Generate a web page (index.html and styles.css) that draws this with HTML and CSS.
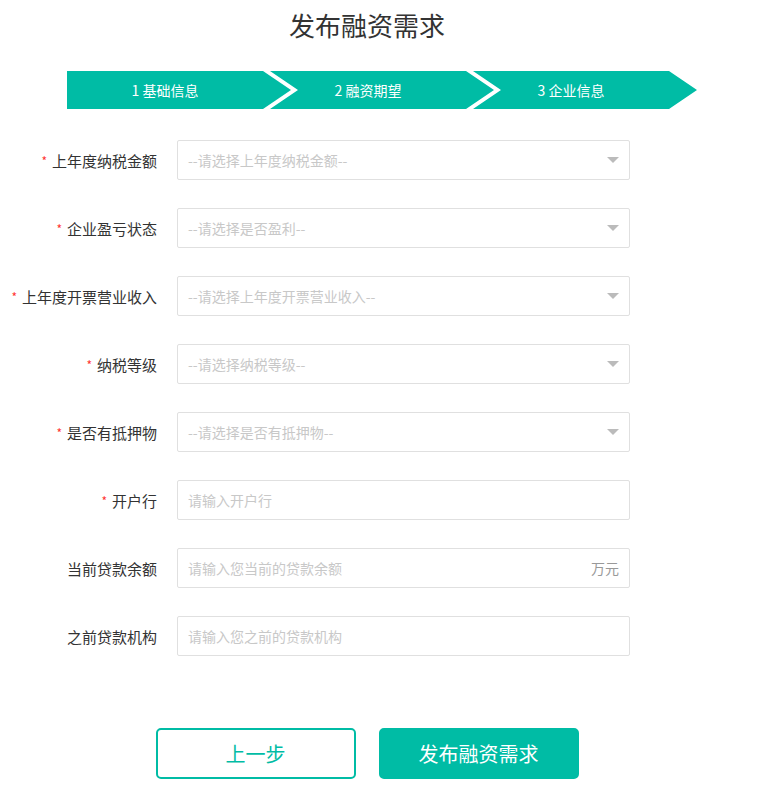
FILE: index.html
```html
<!DOCTYPE html>
<html lang="zh-CN">
<head>
    <meta charset="UTF-8">
    <meta name="viewport" content="width=device-width, initial-scale=1.0">
    <title>发布融资需求</title>
    <link rel="stylesheet" href="styles.css">
</head>
<body>
    <div class="page">
        <h1 class="title">发布融资需求</h1>

        <div class="steps">
            <div class="step step-first">1 基础信息</div>
            <div class="step">2 融资期望</div>
            <div class="step">3 企业信息</div>
        </div>

        <form class="form">
            <div class="form-row">
                <label class="form-label"><span class="required">*</span>上年度纳税金额</label>
                <div class="select">
                    <span class="select-text">--请选择上年度纳税金额--</span>
                    <span class="select-arrow"></span>
                </div>
            </div>
            <div class="form-row">
                <label class="form-label"><span class="required">*</span>企业盈亏状态</label>
                <div class="select">
                    <span class="select-text">--请选择是否盈利--</span>
                    <span class="select-arrow"></span>
                </div>
            </div>
            <div class="form-row">
                <label class="form-label"><span class="required">*</span>上年度开票营业收入</label>
                <div class="select">
                    <span class="select-text">--请选择上年度开票营业收入--</span>
                    <span class="select-arrow"></span>
                </div>
            </div>
            <div class="form-row">
                <label class="form-label"><span class="required">*</span>纳税等级</label>
                <div class="select">
                    <span class="select-text">--请选择纳税等级--</span>
                    <span class="select-arrow"></span>
                </div>
            </div>
            <div class="form-row">
                <label class="form-label"><span class="required">*</span>是否有抵押物</label>
                <div class="select">
                    <span class="select-text">--请选择是否有抵押物--</span>
                    <span class="select-arrow"></span>
                </div>
            </div>
            <div class="form-row">
                <label class="form-label"><span class="required">*</span>开户行</label>
                <div class="field">
                    <input class="field-input" type="text" placeholder="请输入开户行">
                </div>
            </div>
            <div class="form-row">
                <label class="form-label">当前贷款余额</label>
                <div class="field">
                    <input class="field-input" type="text" placeholder="请输入您当前的贷款余额">
                    <span class="field-unit">万元</span>
                </div>
            </div>
            <div class="form-row">
                <label class="form-label">之前贷款机构</label>
                <div class="field">
                    <input class="field-input" type="text" placeholder="请输入您之前的贷款机构">
                </div>
            </div>
        </form>

        <div class="actions">
            <button class="btn btn-outline" type="button">上一步</button>
            <button class="btn btn-primary" type="button">发布融资需求</button>
        </div>
    </div>
</body>
</html>
```

FILE: styles.css
```css
body {
    margin: 0;
    padding: 0;
    background: #fff;
    color: #333;
    font-family: "Microsoft YaHei", "Noto Sans CJK SC", "Noto Sans", sans-serif;
}
.page {
    width: 734px;
}
.title {
    margin: 0;
    height: 50px;
    line-height: 50px;
    font-size: 26px;
    font-weight: normal;
    text-align: center;
    color: #333;
}

/* steps */
.steps {
    display: flex;
    margin: 21px 0 0 67px;
    height: 38px;
}
.step {
    width: 224px;
    height: 38px;
    line-height: 38px;
    padding: 0 28px 0 0;
    box-sizing: border-box;
    margin-left: -21px;
    background: #00bca5;
    color: #fff;
    font-size: 14px;
    text-align: center;
    clip-path: polygon(0 0, 196px 0, 100% 50%, 196px 100%, 0 100%, 28px 50%);
}
.step-first {
    margin-left: 0;
    clip-path: polygon(0 0, 196px 0, 100% 50%, 196px 100%, 0 100%);
}

/* form */
.form {
    margin-top: 31px;
    display: flex;
    flex-direction: column;
    gap: 28px;
}
.form-row {
    display: flex;
    align-items: center;
    height: 40px;
}
.form-label {
    width: 157px;
    padding-right: 20px;
    text-align: right;
    font-size: 15px;
    color: #333;
}
.required {
    color: #f33;
    font-size: 12px;
    margin-right: 5px;
    vertical-align: 1px;
}
.select,
.field {
    display: flex;
    align-items: center;
    width: 453px;
    height: 40px;
    box-sizing: border-box;
    border: 1px solid #e0e0e0;
    border-radius: 2px;
    padding: 0 10px;
    font-size: 14px;
}
.select-text {
    flex: 1;
    color: #c8c8c8;
}
.select-arrow {
    width: 0;
    height: 0;
    border-left: 6px solid transparent;
    border-right: 6px solid transparent;
    border-top: 6px solid #bbb;
}
.field-input {
    flex: 1;
    border: none;
    outline: none;
    padding: 0;
    font-size: 14px;
    font-family: inherit;
    color: #333;
    background: transparent;
}
.field-input::placeholder {
    color: #c8c8c8;
}
.field-unit {
    color: #999;
    font-size: 14px;
}

/* buttons */
.actions {
    display: flex;
    justify-content: center;
    gap: 23px;
    margin-top: 72px;
}
.btn {
    width: 200px;
    height: 51px;
    border-radius: 5px;
    font-size: 20px;
    font-family: inherit;
    cursor: pointer;
}
.btn-outline {
    background: #fff;
    border: 2px solid #00bca5;
    color: #00bca5;
}
.btn-primary {
    background: #00bca5;
    border: 2px solid #00bca5;
    color: #fff;
}
```
